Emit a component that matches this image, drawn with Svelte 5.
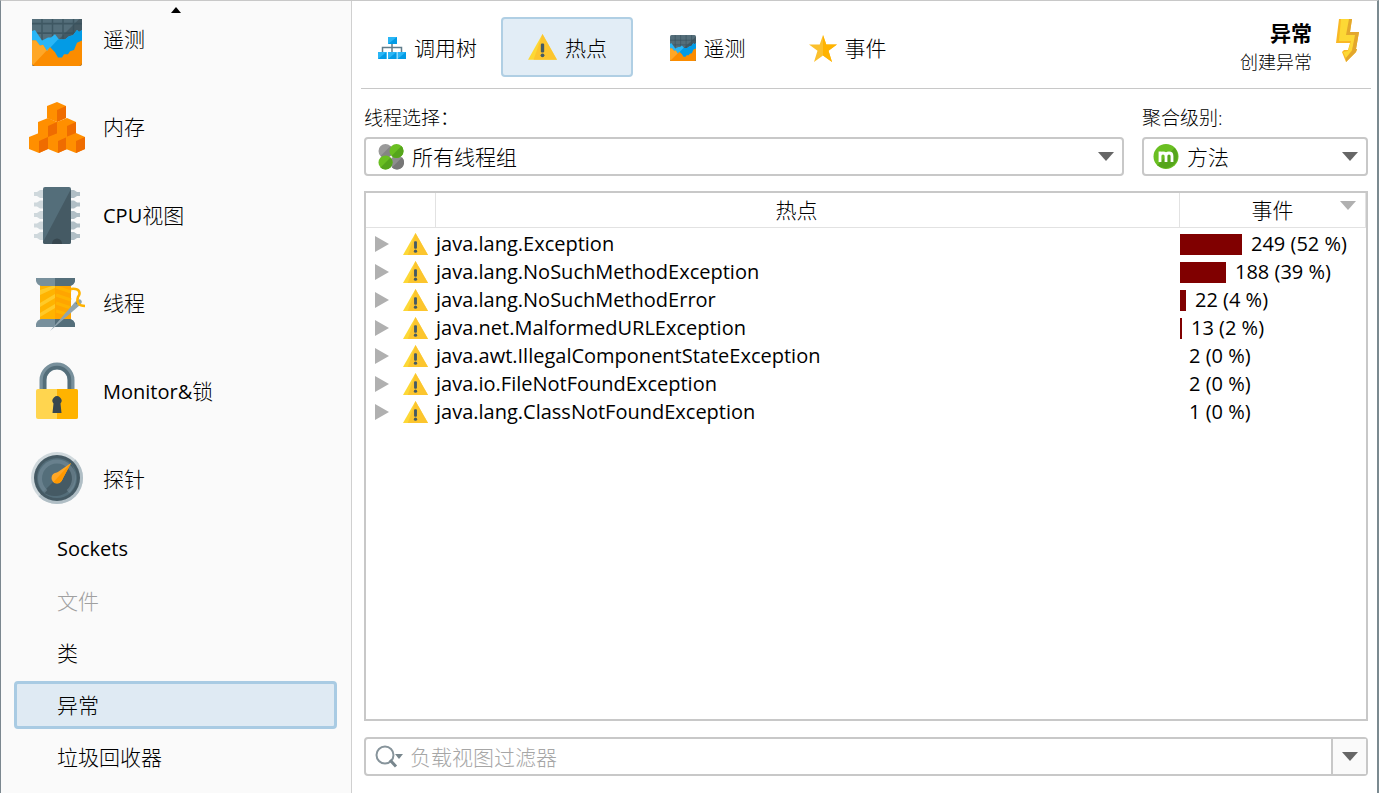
<script lang="ts">
  interface HotSpot {
    name: string;
    count: number;
    percent: number;
    bar: number;
  }

  const sections = [
    { id: 'telemetry', latin: '', label: '遥测' },
    { id: 'memory', latin: '', label: '内存' },
    { id: 'cpu', latin: 'CPU', label: '视图' },
    { id: 'threads', latin: '', label: '线程' },
    { id: 'locks', latin: 'Monitor&', label: '锁' },
    { id: 'probes', latin: '', label: '探针' }
  ];

  const probes = [
    { id: 'sockets', label: 'Sockets', lang: 'en' },
    { id: 'files', label: '文件', disabled: true },
    { id: 'classes', label: '类' },
    { id: 'exceptions', label: '异常' },
    { id: 'gc', label: '垃圾回收器' }
  ];

  const tabs = [
    { id: 'tree', label: '调用树' },
    { id: 'hotspots', label: '热点' },
    { id: 'telemetry', label: '遥测' },
    { id: 'events', label: '事件' }
  ];

  const hotSpots: HotSpot[] = [
    { name: 'java.lang.Exception', count: 249, percent: 52, bar: 62 },
    { name: 'java.lang.NoSuchMethodException', count: 188, percent: 39, bar: 46 },
    { name: 'java.lang.NoSuchMethodError', count: 22, percent: 4, bar: 6 },
    { name: 'java.net.MalformedURLException', count: 13, percent: 2, bar: 2 },
    { name: 'java.awt.IllegalComponentStateException', count: 2, percent: 0, bar: 0 },
    { name: 'java.io.FileNotFoundException', count: 2, percent: 0, bar: 0 },
    { name: 'java.lang.ClassNotFoundException', count: 1, percent: 0, bar: 0 }
  ];

  let selectedProbe = $state('exceptions');
  let selectedTab = $state('hotspots');
  let filter = $state('');
</script>

{#snippet chart(width: number, height: number)}
  <svg {width} {height} viewBox="0 0 50 50" preserveAspectRatio="none" aria-hidden="true">
    <rect width="50" height="50" rx="3" fill="#546e7a" />
    <path d="M50 3v44q0 3-3 3H0z" fill="#455a64" />
    <path d="M10 0v30M20.500 0v30M31 0v30M41.500 0v30M0 10h50M0 19h50" stroke="#37505b" stroke-width="1.500" fill="none" opacity=".75" />
    <path d="M0 17l3-1 7 10 6-3h3l4-3 4 5h6l4-3 4-1 4-5 2 2 3-2v31H0z" fill="#29b6f6" />
    <path d="M26 25h7l4-3 4-1 4-5 2 2 3-2v31H4z" fill="#039be5" />
    <path d="M0 26h4l4 5 3-1 4 6 3-4 5 5 3 5h4l2-3h4l2-3 4-1 3-7 5-2v21a3 3 0 0 1-3 3H3a3 3 0 0 1-3-3z" fill="#fb8c00" />
    <path d="M0 26h4l4 5 3-1 4 6 2-3L1 49q-1-1-1-2z" fill="#ffa726" />
  </svg>
{/snippet}

{#snippet warning(size: number)}
  <svg class="warning" width={size} height={size} viewBox="0 0 26 26" aria-hidden="true">
    <path d="M13 1L0 24h26z" fill="#fdd835" />
    <path d="M13 1l13 23H5z" fill="#fbc02d" opacity=".8" />
    <rect x="11.500" y="9.500" width="3" height="8" rx="1" fill="#455a64" />
    <circle cx="13" cy="20" r="1.700" fill="#455a64" />
  </svg>
{/snippet}

{#snippet cube(x: number, y: number)}
  <g transform="translate({x} {y})">
    <path d="M0 4l10-4 9 4v12l-9 4-10-4z" fill="#ff8f00" />
    <path d="M19 4l-9 4v12l9-4z" fill="#ef6c00" />
  </g>
{/snippet}

{#snippet sectionIcon(id: string)}
  {#if id === 'telemetry'}
    {@render chart(50, 53)}
  {:else if id === 'memory'}
    <svg width="56" height="56" viewBox="0 0 56 56" aria-hidden="true">
      {@render cube(18, 3)}
      {@render cube(9, 19)}
      {@render cube(28, 19)}
      {@render cube(0, 34)}
      {@render cube(19, 34)}
      {@render cube(37, 34)}
    </svg>
  {:else if id === 'cpu'}
    <svg width="56" height="58" viewBox="0 0 56 58" aria-hidden="true">
      {#each [8, 18.5, 29, 39.5, 50] as y}
        <path d="M5 {y - 2}h3l3-2h4v8h-4l-3-2H5z" fill="#cfd8dc" />
        <path d="M51 {y - 2}h-3l-3-2h-4v8h4l3-2h3z" fill="#b0bec5" />
      {/each}
      <rect x="14" y="1" width="28" height="57" rx="2" fill="#546e7a" />
      <path d="M42 3v53a2 2 0 0 1-2 2H16q-2 0-2-2z" fill="#455a64" />
      <path d="M23 58a5 5.500 0 0 1 10 0z" fill="#37474f" />
    </svg>
  {:else if id === 'threads'}
    <svg width="56" height="56" viewBox="0 0 56 56" aria-hidden="true">
      <rect x="11" y="9" width="31" height="38" fill="#ffb300" />
      <path d="M11 15l12-4h3v2l-15 7zM11 28l15-9v4l-15 9zM11 38l15-9v4l-15 9z" fill="#ffca28" />
      <path d="M26 9h16v38H26z" fill="#ffa000" opacity=".75" />
      <path d="M27 12l15 5M27 20l15 5M27 28l15 5M27 36l10 3" stroke="#ffb300" stroke-width="3" />
      <path d="M7 3h39v3q-1 4-5 5H12q-4-1-5-5z" fill="#78909c" />
      <path d="M26 3h20v3q-1 4-5 5H26z" fill="#546e7a" />
      <path d="M7 52h39v-3q-1-4-5-5H12q-4 1-5 5z" fill="#78909c" />
      <path d="M26 52h20v-3q-1-4-5-5H26z" fill="#546e7a" />
      <path d="M21 56l25-29q4-4 6-2t-1 5z" fill="#90a4ae" />
      <path d="M47 29l2-2" stroke="#607d8b" stroke-width="1.500" />
      <path d="M42 14c9-1 10 4 7 8-2 6 1 9 7 9" stroke="#ffb300" stroke-width="2.500" fill="none" />
    </svg>
  {:else if id === 'locks'}
    <svg width="56" height="58" viewBox="0 0 56 58" aria-hidden="true">
      <path d="M14 28V18a14 14 0 0 1 28 0v10" stroke="#78909c" stroke-width="7" fill="none" />
      <path d="M15.500 28V18a12.500 12.500 0 0 1 25 0v10" stroke="#546e7a" stroke-width="3.500" fill="none" />
      <rect x="7" y="27" width="42" height="30" rx="2" fill="#ffd54f" />
      <path d="M28 27h19q2 0 2 2v26q0 2-2 2H28z" fill="#ffb300" />
      <path d="M24.500 41.500a4.500 4.500 0 1 1 7 0L32.500 51h-9z" fill="#37474f" />
    </svg>
  {:else}
    <svg width="56" height="56" viewBox="0 0 56 56" aria-hidden="true">
      <circle cx="28" cy="27" r="26" fill="#cfd8dc" />
      <path d="M46.400 8.600a26 26 0 0 1-36.800 36.800z" fill="#b0bec5" />
      <circle cx="28" cy="27" r="23" fill="#455a64" />
      <circle cx="28" cy="27" r="20" fill="#546e7a" />
      <path d="M42 13a20 20 0 0 1-28 28z" fill="#455a64" />
      <path d="M17 40.500a17 17 0 1 1 22 0" stroke="#78909c" stroke-width="4" fill="none" opacity=".55" />
      <path d="M42 12L32.500 30l-8-6z" fill="#ffa726" />
      <circle cx="28" cy="27" r="5.500" fill="#ffa726" />
      <path d="M42 12L32.500 30a5.500 5.500 0 0 1-8 1z" fill="#ff9800" />
    </svg>
  {/if}
{/snippet}

{#snippet tabIcon(id: string)}
  {#if id === 'tree'}
    <svg width="28" height="26" viewBox="0 0 28 26" aria-hidden="true">
      <path d="M14 9v9M4.500 18v-5.500h19V18" stroke="#607d8b" stroke-width="1.500" fill="none" />
      <path d="M10 2h9v7h-9zM0 17h8.500v7H0zM10 17h8.500v7H10zM19.500 17H28v7h-8.500z" fill="#29b6f6" />
      <path d="M19 2v7h-9zM8.500 17v7H0zM18.500 17v7H10zM28 17v7h-8.500z" fill="#039be5" />
    </svg>
  {:else if id === 'hotspots'}
    {@render warning(29)}
  {:else if id === 'telemetry'}
    {@render chart(26, 26)}
  {:else}
    <svg width="28" height="28" viewBox="0 0 28 28" aria-hidden="true">
      <path d="M14 1l3.300 9.500H28l-8.500 6.200L23 28l-9-6.500L5 28l3.500-11.300L0 10.500h10.700z" fill="#fbc02d" />
      <path d="M14 1l3.300 9.500H28l-8.500 6.200L23 28l-9-6.500z" fill="#ffb300" />
    </svg>
  {/if}
{/snippet}

{#snippet arrow(kind: string)}
  <svg class="arrow {kind}" width="16" height="9" viewBox="0 0 16 9" aria-hidden="true">
    <path d="M0 0h16L8 9z" />
  </svg>
{/snippet}

<div class="window" lang="zh-CN">
  <aside class="sidebar">
    <button class="scroll-up" aria-label="向上滚动">
      <svg width="10" height="6" viewBox="0 0 10 6" aria-hidden="true"><path d="M5 0l5 6H0z" /></svg>
    </button>
    <div class="viewport">
      <nav class="sections">
        {#each sections as section}
          <button class="section">
            <span class="section-icon">{@render sectionIcon(section.id)}</span>
            <span><span class="latin">{section.latin}</span>{section.label}</span>
          </button>
        {/each}
        {#each probes as probe}
          <button
            class="probe"
            class:selected={selectedProbe === probe.id}
            lang={probe.lang}
            disabled={probe.disabled}
            onclick={() => (selectedProbe = probe.id)}
          >
            {probe.label}
          </button>
        {/each}
      </nav>
    </div>
  </aside>

  <main class="content">
    <header class="toolbar">
      <div class="tabs">
        {#each tabs as tab}
          <button class="tab" class:selected={selectedTab === tab.id} onclick={() => (selectedTab = tab.id)}>
            {@render tabIcon(tab.id)}
            {tab.label}
          </button>
        {/each}
      </div>
      <div class="heading">
        <div class="heading-text">
          <h1>异常</h1>
          <p>创建异常</p>
        </div>
        <svg width="24" height="44" viewBox="0 0 24 44" aria-hidden="true">
          <path d="M3 0h13l-2 13h9l-3 17h1l-1 3-10 10-4-10 2-2h4l2-7H0z" fill="#f9b825" />
          <path d="M5 0h9l-3 15h9l-4 16-6 8-3-6 5-1 3-10H3z" fill="#fdd835" />
          <path d="M16 0l-2 13h9l-3 17h1l-1 3-10 10v-4l6-7 3-16h-9L13 0z" fill="#e3a72c" />
        </svg>
      </div>
    </header>

    <div class="options">
      <div class="field threads">
        <label for="thread-group">线程选择：</label>
        <div class="combo">
          <svg class="combo-icon" width="26" height="26" viewBox="0 0 26 26" aria-hidden="true">
            <circle cx="7.500" cy="7" r="7" fill="#9a9a9a" />
            <path d="M12.500 2a7 7 0 0 1-10 10z" fill="#858585" />
            <circle cx="19" cy="18.500" r="7" fill="#8e8e8e" />
            <path d="M24 13.500a7 7 0 0 1-10 10z" fill="#777" />
            <circle cx="18.500" cy="7" r="7" fill="#6abf22" />
            <path d="M23.500 2a7 7 0 0 1-10 10z" fill="#55a51c" />
            <circle cx="7.500" cy="18.500" r="7" fill="#6abf22" />
            <path d="M12.500 13.500a7 7 0 0 1-10 10z" fill="#55a51c" />
          </svg>
          <select id="thread-group">
            <option>所有线程组</option>
          </select>
          {@render arrow('in-combo')}
        </div>
      </div>
      <div class="field level">
        <label for="level">聚合级别:</label>
        <div class="combo">
          <svg class="combo-icon" width="26" height="26" viewBox="0 0 26 26" aria-hidden="true">
            <circle cx="13" cy="12.500" r="12.500" fill="#6abf22" />
            <path d="M21.800 3.700a12.500 12.500 0 0 1-17.600 17.600z" fill="#55a51c" />
            <path d="M7 18V7.500M7 18v-6q0-3 3-3t3 3v6M13 12q0-3 3-3t3 3v6" stroke="#fff" stroke-width="2.800" fill="none" />
          </svg>
          <select id="level">
            <option>方法</option>
          </select>
          {@render arrow('in-combo')}
        </div>
      </div>
    </div>

    <div class="table-box">
      <table>
        <colgroup>
          <col class="col-icon" />
          <col />
          <col class="col-events" />
        </colgroup>
        <thead>
          <tr>
            <th></th>
            <th class="name">热点</th>
            <th>事件 {@render arrow('sort')}</th>
          </tr>
        </thead>
        <tbody>
          {#each hotSpots as spot}
            <tr>
              <td>
                <div class="row-icons">
                  <button class="expand" aria-label="展开">
                    <svg width="14" height="16" viewBox="0 0 14 16" aria-hidden="true"><path d="M0 0l14 8-14 8z" /></svg>
                  </button>
                  {@render warning(25)}
                </div>
              </td>
              <td>{spot.name}</td>
              <td>
                <div class="events">
                  <span class="bar" style="width: {spot.bar}px"></span>
                  {spot.count} ({spot.percent} %)
                </div>
              </td>
            </tr>
          {/each}
        </tbody>
      </table>
    </div>

    <div class="filter">
      <svg width="30" height="24" viewBox="0 0 30 24" aria-hidden="true">
        <circle cx="10" cy="10" r="8.500" stroke="#87949b" stroke-width="2" fill="none" />
        <path d="M15 15l6 6.500" stroke="#78868d" stroke-width="3" />
        <path d="M20 9h8l-4 5z" fill="#78868d" />
      </svg>
      <input type="text" aria-label="过滤器" placeholder="负载视图过滤器" bind:value={filter} />
      <button class="history" aria-label="历史">{@render arrow('plain')}</button>
    </div>
  </main>
</div>

<style>
  :global(body) {
    background: #fff;
  }

  .window {
    display: flex;
    box-sizing: border-box;
    min-height: 100vh;
    border-top: 1px solid #c8c8c8;
    border-left: 1px solid #7b878f;
    border-right: 2px solid #7b8a90;
    font-family: 'Open Sans', 'Noto Sans CJK SC', sans-serif;
    font-size: 21px;
    font-weight: 300;
    line-height: 28px;
    color: #000;
  }

  button,
  select,
  input {
    margin: 0;
    padding: 0;
    border: none;
    background: none;
    font: inherit;
    color: inherit;
  }

  svg {
    display: block;
    flex: none;
  }

  .sidebar {
    flex: none;
    width: 350px;
    background: #fafafa;
    border-right: 1px solid #d0d0d0;
  }

  .scroll-up {
    display: flex;
    justify-content: center;
    align-items: center;
    width: 100%;
    height: 18px;
  }

  .viewport {
    overflow: hidden;
  }

  /* scrolled down a little, so the first entry is cut at its top */
  .sections {
    display: flex;
    flex-direction: column;
    margin-top: -24px;
  }

  .section {
    display: flex;
    align-items: center;
    gap: 18px;
    height: 88px;
    padding-left: 28px;
    text-align: left;
  }

  .section-icon {
    display: flex;
    justify-content: center;
    width: 56px;
  }

  .latin,
  .probe:lang(en) {
    font-size: 20px;
    font-weight: 400;
  }

  .probe {
    box-sizing: border-box;
    height: 48px;
    margin: 2px 14px 2px 13px;
    padding-left: 40px;
    border: 3px solid transparent;
    border-radius: 4px;
    text-align: left;
  }

  .probe:disabled {
    color: #a0a0a0;
  }

  .probe.selected {
    background: #dfeaf3;
    border-color: #a9cbe3;
  }

  .content {
    display: flex;
    flex-direction: column;
    flex: 1;
    min-width: 0;
    padding: 0 6px 17px 9px;
  }

  .toolbar {
    display: flex;
    justify-content: space-between;
    align-items: flex-start;
    height: 87px;
    border-bottom: 1px solid #c8c8c8;
  }

  .tabs {
    display: flex;
    gap: 8px;
    padding-top: 16px;
  }

  .tab {
    display: flex;
    justify-content: center;
    align-items: center;
    gap: 8px;
    box-sizing: border-box;
    width: 132px;
    height: 60px;
    padding: 1px 0 0 1px;
    border: 2px solid transparent;
    border-radius: 4px;
  }

  .tab.selected {
    background: #e2edf6;
    border-color: #b0cfe4;
  }

  .heading {
    display: flex;
    gap: 24px;
    padding: 18px 11px 0 0;
    text-align: right;
  }

  h1,
  p {
    margin: 0;
  }

  h1 {
    font-size: 21px;
    font-weight: bold;
  }

  p {
    font-size: 18px;
    line-height: 30px;
  }

  .options {
    display: flex;
    gap: 18px;
    padding: 15px 3px 0;
  }

  .field {
    display: flex;
    flex-direction: column;
    gap: 5px;
  }

  .threads {
    flex: 1;
  }

  .level {
    width: 226px;
  }

  label {
    font-size: 19px;
  }

  .combo {
    position: relative;
  }

  .combo-icon {
    position: absolute;
    left: 14px;
    top: 7px;
  }

  select {
    display: block;
    box-sizing: border-box;
    width: 100%;
    height: 39px;
    padding-left: 46px;
    appearance: none;
    border: 2px solid #c8c8c8;
    border-radius: 4px;
  }

  .level .combo-icon {
    left: 11px;
  }

  .level select {
    padding-left: 43px;
  }

  .arrow {
    fill: #666;
  }

  .in-combo {
    position: absolute;
    right: 10px;
    top: 15px;
    pointer-events: none;
  }

  .table-box {
    flex: 1;
    margin: 15px 3px 16px;
    border: 2px solid #c8c8c8;
  }

  table {
    width: 100%;
    table-layout: fixed;
    border-spacing: 0;
  }

  .col-icon {
    width: 70px;
  }

  .col-events {
    width: 186px;
  }

  th {
    position: relative;
    height: 34px;
    padding: 0;
    border-right: 1px solid #e2e2e2;
    border-bottom: 1px solid #e2e2e2;
    font-weight: inherit;
  }

  th.name {
    padding-right: 22px;
  }

  .sort {
    position: absolute;
    right: 9px;
    top: 8px;
    fill: #b0b0b0;
  }

  td {
    height: 28px;
    padding: 0;
    font-size: 20px;
    font-weight: 400;
    white-space: nowrap;
  }

  tbody::before {
    content: '';
    display: block;
    height: 2px;
  }

  .row-icons {
    display: flex;
    align-items: center;
    gap: 14px;
    padding-left: 9px;
  }

  .expand {
    fill: #b0b0b0;
  }

  .events {
    display: flex;
    align-items: center;
    gap: 9px;
  }

  .bar {
    height: 21px;
    background: #800000;
  }

  .filter {
    display: flex;
    align-items: center;
    box-sizing: border-box;
    height: 39px;
    margin: 0 3px;
    padding-left: 9px;
    border: 2px solid #c8c8c8;
    border-radius: 4px;
  }

  input {
    flex: 1;
    min-width: 0;
    padding-left: 5px;
    outline: none;
  }

  input::placeholder {
    color: #a6a6a6;
  }

  .history {
    display: flex;
    justify-content: center;
    align-items: center;
    align-self: stretch;
    width: 35px;
    background: #fafafa;
    border-left: 2px solid #c8c8c8;
  }
</style>
